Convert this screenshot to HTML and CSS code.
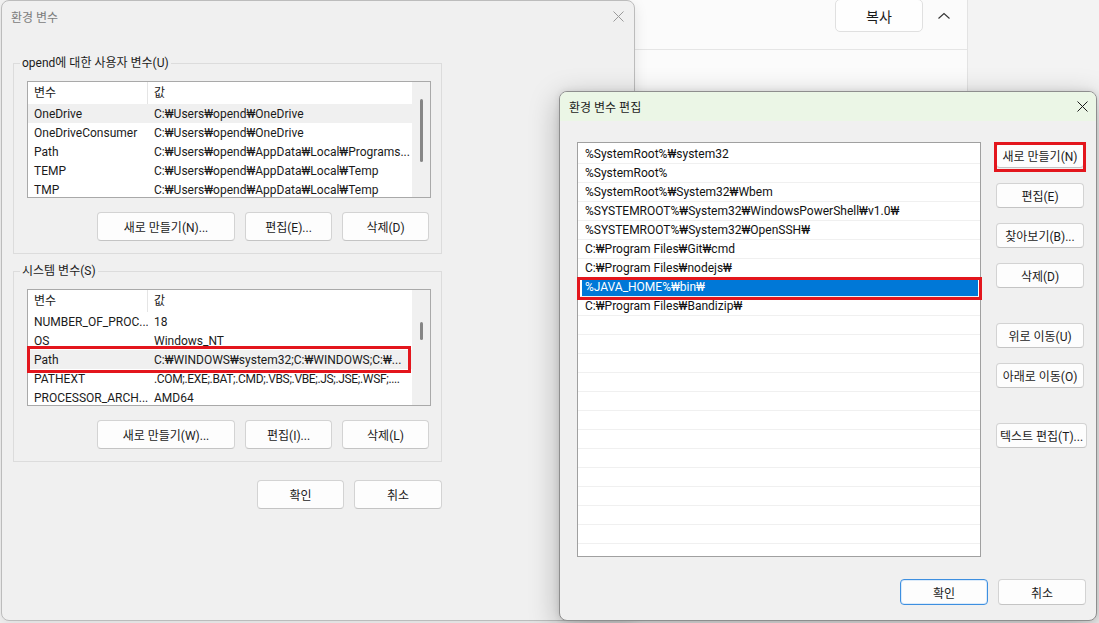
FILE: index.html
```html
<!DOCTYPE html>
<html lang="ko">
<head>
<meta charset="utf-8">
<title>환경 변수</title>
<link rel="stylesheet" href="styles.css">
</head>
<body>
<div class="desk">
  <div class="bgpanel">
    <div class="bgbar">
      <button class="copy">복사</button>
      <span class="chev"><svg width="14" height="8" viewBox="0 0 14 8"><polyline points="1.5,6.5 7,1.5 12.5,6.5" fill="none" stroke="#333" stroke-width="1.1"/></svg></span>
    </div>
  </div>

  <section class="win env">
    <header class="tb tb-env">
      <span class="tt tt-in">환경 변수</span>
      <span class="xbtn xbtn-env"><svg width="11" height="11" viewBox="0 0 11 11"><path d="M0.5 0.5L10.5 10.5M10.5 0.5L0.5 10.5" stroke="#9a9a9a" stroke-width="1"/></svg></span>
    </header>
    <div class="envbody">
      <div class="group">
        <span class="legend">opend에 대한 사용자 변수(U)</span>
        <div class="lv">
          <div class="lvc">
            <div class="lvh"><span class="c1">변수</span><span class="c2">값</span></div>
            <div class="lvr hl"><span class="c1">OneDrive</span><span class="c2">C:₩Users₩opend₩OneDrive</span></div>
            <div class="lvr"><span class="c1">OneDriveConsumer</span><span class="c2">C:₩Users₩opend₩OneDrive</span></div>
            <div class="lvr"><span class="c1">Path</span><span class="c2">C:₩Users₩opend₩AppData₩Local₩Programs...</span></div>
            <div class="lvr"><span class="c1">TEMP</span><span class="c2">C:₩Users₩opend₩AppData₩Local₩Temp</span></div>
            <div class="lvr"><span class="c1">TMP</span><span class="c2">C:₩Users₩opend₩AppData₩Local₩Temp</span></div>
          </div>
          <div class="sb"><i class="thumb t1"></i></div>
        </div>
        <div class="btns">
          <button class="b wide">새로 만들기(N)...</button>
          <button class="b">편집(E)...</button>
          <button class="b">삭제(D)</button>
        </div>
      </div>

      <div class="group g2">
        <span class="legend">시스템 변수(S)</span>
        <div class="lv">
          <div class="lvc">
            <div class="lvh"><span class="c1">변수</span><span class="c2">값</span></div>
            <div class="lvr"><span class="c1">NUMBER_OF_PROC...</span><span class="c2">18</span></div>
            <div class="lvr"><span class="c1">OS</span><span class="c2">Windows_NT</span></div>
            <div class="lvr hl"><span class="c1">Path</span><span class="c2">C:₩WINDOWS₩system32;C:₩WINDOWS;C:₩...</span></div>
            <div class="lvr"><span class="c1">PATHEXT</span><span class="c2 tight">.COM;.EXE;.BAT;.CMD;.VBS;.VBE;.JS;.JSE;.WSF;....</span></div>
            <div class="lvr"><span class="c1">PROCESSOR_ARCH...</span><span class="c2">AMD64</span></div>
          </div>
          <div class="sb"><i class="thumb t2"></i></div>
        </div>
        <div class="btns">
          <button class="b wide">새로 만들기(W)...</button>
          <button class="b">편집(I)...</button>
          <button class="b">삭제(L)</button>
        </div>
      </div>

      <div class="envfoot">
        <button class="b">확인</button>
        <button class="b b88">취소</button>
      </div>
    </div>
  </section>

  <section class="win edit">
    <header class="tb tb-edit">
      <span class="tt">환경 변수 편집</span>
      <span class="xbtn xbtn-edit"><svg width="11" height="11" viewBox="0 0 11 11"><path d="M0.5 0.5L10.5 10.5M10.5 0.5L0.5 10.5" stroke="#1b1b1b" stroke-width="1"/></svg></span>
    </header>
    <div class="editmain">
      <div class="plist">
        <div class="pr">%SystemRoot%₩system32</div>
        <div class="pr">%SystemRoot%</div>
        <div class="pr">%SystemRoot%₩System32₩Wbem</div>
        <div class="pr">%SYSTEMROOT%₩System32₩WindowsPowerShell₩v1.0₩</div>
        <div class="pr">%SYSTEMROOT%₩System32₩OpenSSH₩</div>
        <div class="pr">C:₩Program Files₩Git₩cmd</div>
        <div class="pr">C:₩Program Files₩nodejs₩</div>
        <div class="pr sel">%JAVA_HOME%₩bin₩</div>
        <div class="pr">C:₩Program Files₩Bandizip₩</div>
        <div class="pr"></div><div class="pr"></div><div class="pr"></div><div class="pr"></div>
        <div class="pr"></div><div class="pr"></div><div class="pr"></div><div class="pr"></div>
        <div class="pr"></div><div class="pr"></div><div class="pr"></div><div class="pr"></div>
        <div class="pr"></div>
      </div>
      <div class="pcol">
        <button class="b pb">새로 만들기(N)</button>
        <button class="b pb">편집(E)</button>
        <button class="b pb">찾아보기(B)...</button>
        <button class="b pb">삭제(D)</button>
        <button class="b pb sp">위로 이동(U)</button>
        <button class="b pb">아래로 이동(O)</button>
        <button class="b pb sp pbw">텍스트 편집(T)...</button>
      </div>
    </div>
    <div class="editfoot">
      <button class="b pb ok">확인</button>
      <button class="b pb">취소</button>
    </div>
  </section>

  <div class="rb rb1"></div>
  <div class="rb rb2"></div>
  <div class="rb rb3"></div>
</div>
</body>
</html>
```

FILE: styles.css
```css
html, body {
  margin: 0;
  padding: 0;
}
body {
  width: 1099px;
  height: 623px;
  overflow: hidden;
  background: #f3f3f3;
  font-family: Roboto, "Noto Sans CJK KR", sans-serif;
  font-size: 12px;
  color: #1b1b1b;
}
.desk {
  position: relative;
  width: 1099px;
  height: 623px;
}

/* background app */
.bgpanel {
  position: absolute;
  left: 600px;
  top: 0;
  width: 367px;
  height: 300px;
  background: #fbfbfb;
  border-right: 1px solid #e3e3e3;
}
.bgbar {
  height: 49px;
  border-bottom: 1px solid #e5e5e5;
  display: flex;
  justify-content: flex-end;
  align-items: flex-start;
  gap: 9px;
  padding-right: 11px;
}
.copy {
  width: 88px;
  height: 33px;
  margin-top: -1px;
  background: #fefefe;
  border: 1px solid #e0e0e0;
  border-radius: 5px;
  font-family: inherit;
  font-size: 14px;
  color: #1b1b1b;
  padding: 0;
}
.chev {
  width: 24px;
  height: 31px;
  display: flex;
  align-items: center;
  justify-content: center;
}

/* windows */
.win {
  position: absolute;
  box-sizing: border-box;
  background: #f0f0f0;
}
.env {
  left: 1px;
  top: 0;
  width: 634px;
  height: 621px;
  border: 1px solid #bcbcbc;
  border-radius: 8px;
  box-shadow: 0 4px 14px rgba(0, 0, 0, 0.10);
}
.tb {
  display: flex;
  justify-content: space-between;
  align-items: center;
}
.tb-env {
  height: 31px;
  padding-left: 9px;
}
.tt-in {
  color: #7c7c7c;
}
.xbtn {
  display: flex;
  align-items: center;
  justify-content: center;
}
.xbtn-env {
  width: 32px;
  height: 31px;
}
.envbody {
  padding-left: 11px;
  padding-top: 31px;
}
.group {
  position: relative;
  width: 429px;
  box-sizing: border-box;
  border: 1px solid #dcdcdc;
  padding: 17px 10px 12px 13px;
}
.g2 {
  margin-top: 17px;
}
.legend {
  position: absolute;
  left: 6px;
  top: -8px;
  padding: 0 2px;
  line-height: 14px;
  background: #f0f0f0;
  white-space: nowrap;
}
.lv {
  width: 404px;
  height: 117px;
  box-sizing: border-box;
  border: 1px solid #a9a9a9;
  background: #fff;
  display: flex;
}
.lvc {
  flex: 1;
  overflow: hidden;
}
.sb {
  width: 18px;
  background: #f0f0f0;
  display: flex;
  justify-content: center;
  align-items: flex-start;
}
.thumb {
  display: block;
  width: 3px;
  border-radius: 2px;
  background: #868686;
}
.t1 {
  margin-top: 17px;
  height: 63px;
}
.t2 {
  margin-top: 32px;
  height: 18px;
}
.lvh {
  height: 22px;
  line-height: 23px;
  display: flex;
}
.lvr {
  height: 19px;
  line-height: 20px;
  display: flex;
}
.c1 {
  width: 120px;
  flex: none;
  box-sizing: border-box;
  padding-left: 6px;
  white-space: nowrap;
  overflow: hidden;
}
.lvh .c1 {
  border-right: 1px solid #e5e5e5;
}
.c2 {
  flex: 1;
  min-width: 0;
  padding-left: 6px;
  white-space: nowrap;
  overflow: hidden;
}
.tight {
  letter-spacing: -0.35px;
}
.hl {
  background: #f0f0f0;
}
.btns {
  display: flex;
  justify-content: flex-end;
  gap: 10px;
  margin-top: 14px;
  padding-right: 2px;
}
.b {
  width: 87px;
  height: 29px;
  box-sizing: border-box;
  padding: 0;
  border: 1px solid #d3d3d3;
  border-bottom-color: #c4c4c4;
  border-radius: 4px;
  background: #fdfdfd;
  font-family: inherit;
  font-size: 12px;
  color: #1b1b1b;
  white-space: nowrap;
}
.wide {
  width: 138px;
}
.b88 {
  width: 88px;
}
.envfoot {
  width: 429px;
  display: flex;
  justify-content: flex-end;
  gap: 10px;
  margin-top: 18px;
}

/* edit dialog */
.edit {
  left: 559px;
  top: 91px;
  width: 538px;
  height: 530px;
  border: 1px solid #8e8e8e;
  border-radius: 8px;
  overflow: hidden;
  box-shadow: 0 8px 30px rgba(0, 0, 0, 0.28), 0 0 6px rgba(0, 0, 0, 0.10);
}
.tb-edit {
  height: 29px;
  padding-left: 9px;
  background: #ebf6e6;
}
.xbtn-edit {
  width: 28px;
  height: 29px;
}
.editmain {
  display: flex;
  gap: 15px;
  margin-top: 21px;
  padding-left: 17px;
}
.plist {
  width: 404px;
  height: 415px;
  flex: none;
  box-sizing: border-box;
  border: 1px solid #a0a0a0;
  background: #fff;
  padding-top: 2px;
  overflow: hidden;
}
.pr {
  height: 19px;
  box-sizing: border-box;
  border-bottom: 1px solid #f0f0f0;
  line-height: 18px;
  padding-left: 7px;
  white-space: nowrap;
  color: #111;
}
.pr.sel {
  background: linear-gradient(#0078d7, #0078d7) 4px 2px / calc(100% - 6px) 17px no-repeat;
  color: #fff;
}
.pcol {
  display: flex;
  flex-direction: column;
  align-items: flex-start;
  gap: 15px;
  padding-top: 1px;
}
.pb {
  width: 88px;
  height: 25px;
}
.pb.sp {
  margin-top: 20px;
}
.pbw {
  width: 91px;
}
.editfoot {
  display: flex;
  justify-content: flex-end;
  gap: 10px;
  margin-top: 22px;
  padding-right: 10px;
}
.editfoot .pb {
  height: 26px;
}
.ok {
  border: 1px solid #3d8fe0;
  box-shadow: inset 0 0 0 1px #dcebfa;
}

/* red annotation boxes */
.rb {
  position: absolute;
  box-sizing: border-box;
  border: 3px solid #e3161d;
}
.rb1 {
  left: 27px;
  top: 346px;
  width: 384px;
  height: 27px;
}
.rb2 {
  left: 577px;
  top: 277px;
  width: 405px;
  height: 23px;
}
.rb3 {
  left: 994px;
  top: 142px;
  width: 92px;
  height: 30px;
}
```
